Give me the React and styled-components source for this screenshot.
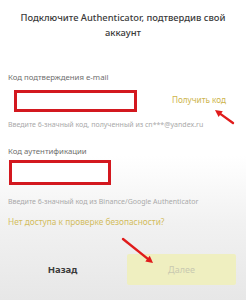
import styled, { createGlobalStyle } from 'styled-components';

const GlobalStyle = createGlobalStyle`
  html, body {
    margin: 0;
    padding: 0;
  }
  body {
    font-family: "Noto Sans", "Open Sans", sans-serif;
    background: #fff;
  }
`;

const Page = styled.div`
  position: relative;
  width: 246px;
  height: 300px;
  box-sizing: border-box;
  padding: 10px 8px 0 8px;
  overflow: hidden;
  background: linear-gradient(180deg, #ffffff 0%, #ffffff 52%, #f1f1f1 75%, #e7e7e7 100%);
`;

const Title = styled.h1`
  margin: 0;
  font-size: 9.4px;
  line-height: 15px;
  font-weight: 500;
  color: #3a3a3a;
  text-align: center;
`;

const Label = styled.div`
  font-size: 7.8px;
  line-height: 12px;
  color: #6e6e6e;
  margin-top: ${(p) => p.$top}px;
`;

const Row = styled.div`
  display: flex;
  align-items: center;
  justify-content: space-between;
  margin-top: ${(p) => p.$top}px;
`;

const InputBox = styled.div`
  box-sizing: border-box;
  width: ${(p) => p.$w}px;
  height: ${(p) => p.$h}px;
  margin-left: ${(p) => p.$left}px;
  margin-top: ${(p) => p.$top || 0}px;
  border: 3px solid #d3181f;
  background: #fff;
`;

const GetCode = styled.span`
  font-size: 8.2px;
  color: #cdb44c;
  margin-right: 12px;
  margin-top: -3px;
`;

const Hint = styled.div`
  font-size: 7px;
  line-height: 10px;
  color: #a9a9a9;
  margin-top: ${(p) => p.$top}px;
  white-space: nowrap;
`;

const GoldLink = styled.div`
  font-size: 8.3px;
  line-height: 12px;
  color: #d3bd5f;
  margin-top: ${(p) => p.$top}px;
`;

const Buttons = styled.div`
  display: flex;
  align-items: center;
  margin-top: 26px;
  margin-right: 2px;
`;

const BackButton = styled.div`
  flex: 1;
  height: 31px;
  display: flex;
  align-items: center;
  justify-content: center;
  font-size: 9.5px;
  font-weight: 700;
  color: #3c3c3c;
  padding-right: 10px;
`;

const NextButton = styled.div`
  width: 109px;
  height: 31px;
  display: flex;
  align-items: center;
  justify-content: center;
  background: #efefc0;
  border-radius: 2px;
  font-size: 9px;
  color: #c9c9b0;
`;

const Arrow = styled.svg`
  position: absolute;
  left: 0;
  top: 0;
  pointer-events: none;
`;

const RedArrow = ({ x1, y1, x2, y2 }) => {
  const a = Math.atan2(y2 - y1, x2 - x1);
  const len = 7;
  const w = 3.6;
  const bx = x2 - len * Math.cos(a);
  const by = y2 - len * Math.sin(a);
  const px = -Math.sin(a) * w;
  const py = Math.cos(a) * w;
  return (
    <g>
      <line x1={x1} y1={y1} x2={bx} y2={by} stroke="#e01b1b" strokeWidth="2.4" strokeLinecap="round" />
      <polygon points={`${x2},${y2} ${bx + px},${by + py} ${bx - px},${by - py}`} fill="#e01b1b" />
    </g>
  );
};

const App = () => {
  return (
    <>
      <GlobalStyle />
      <Page>
        <Title>
          Подключите Authenticator, подтвердив свой
          <br />
          аккаунт
        </Title>

        <Label $top={31}>Код подтверждения e-mail</Label>
        <Row $top={7}>
          <InputBox $w={123} $h={22} $left={6} />
          <GetCode>Получить код</GetCode>
        </Row>
        <Hint $top={8}>Введите 6-значный код, полученный из cn***@yandex.ru</Hint>

        <Label $top={15}>Код аутентификации</Label>
        <InputBox $w={102} $h={25} $left={1} $top={3} />
        <Hint $top={12}>Введите 6-значный код из Binance/Google Authenticator</Hint>

        <GoldLink $top={9}>Нет доступа к проверке безопасности?</GoldLink>

        <Buttons>
          <BackButton>Назад</BackButton>
          <NextButton>Далее</NextButton>
        </Buttons>

        <Arrow width="246" height="300" viewBox="0 0 246 300">
          <RedArrow x1={233} y1={123} x2={215} y2={110} />
          <RedArrow x1={123} y1={239} x2={153} y2={263} />
        </Arrow>
      </Page>
    </>
  );
};

export default App;
